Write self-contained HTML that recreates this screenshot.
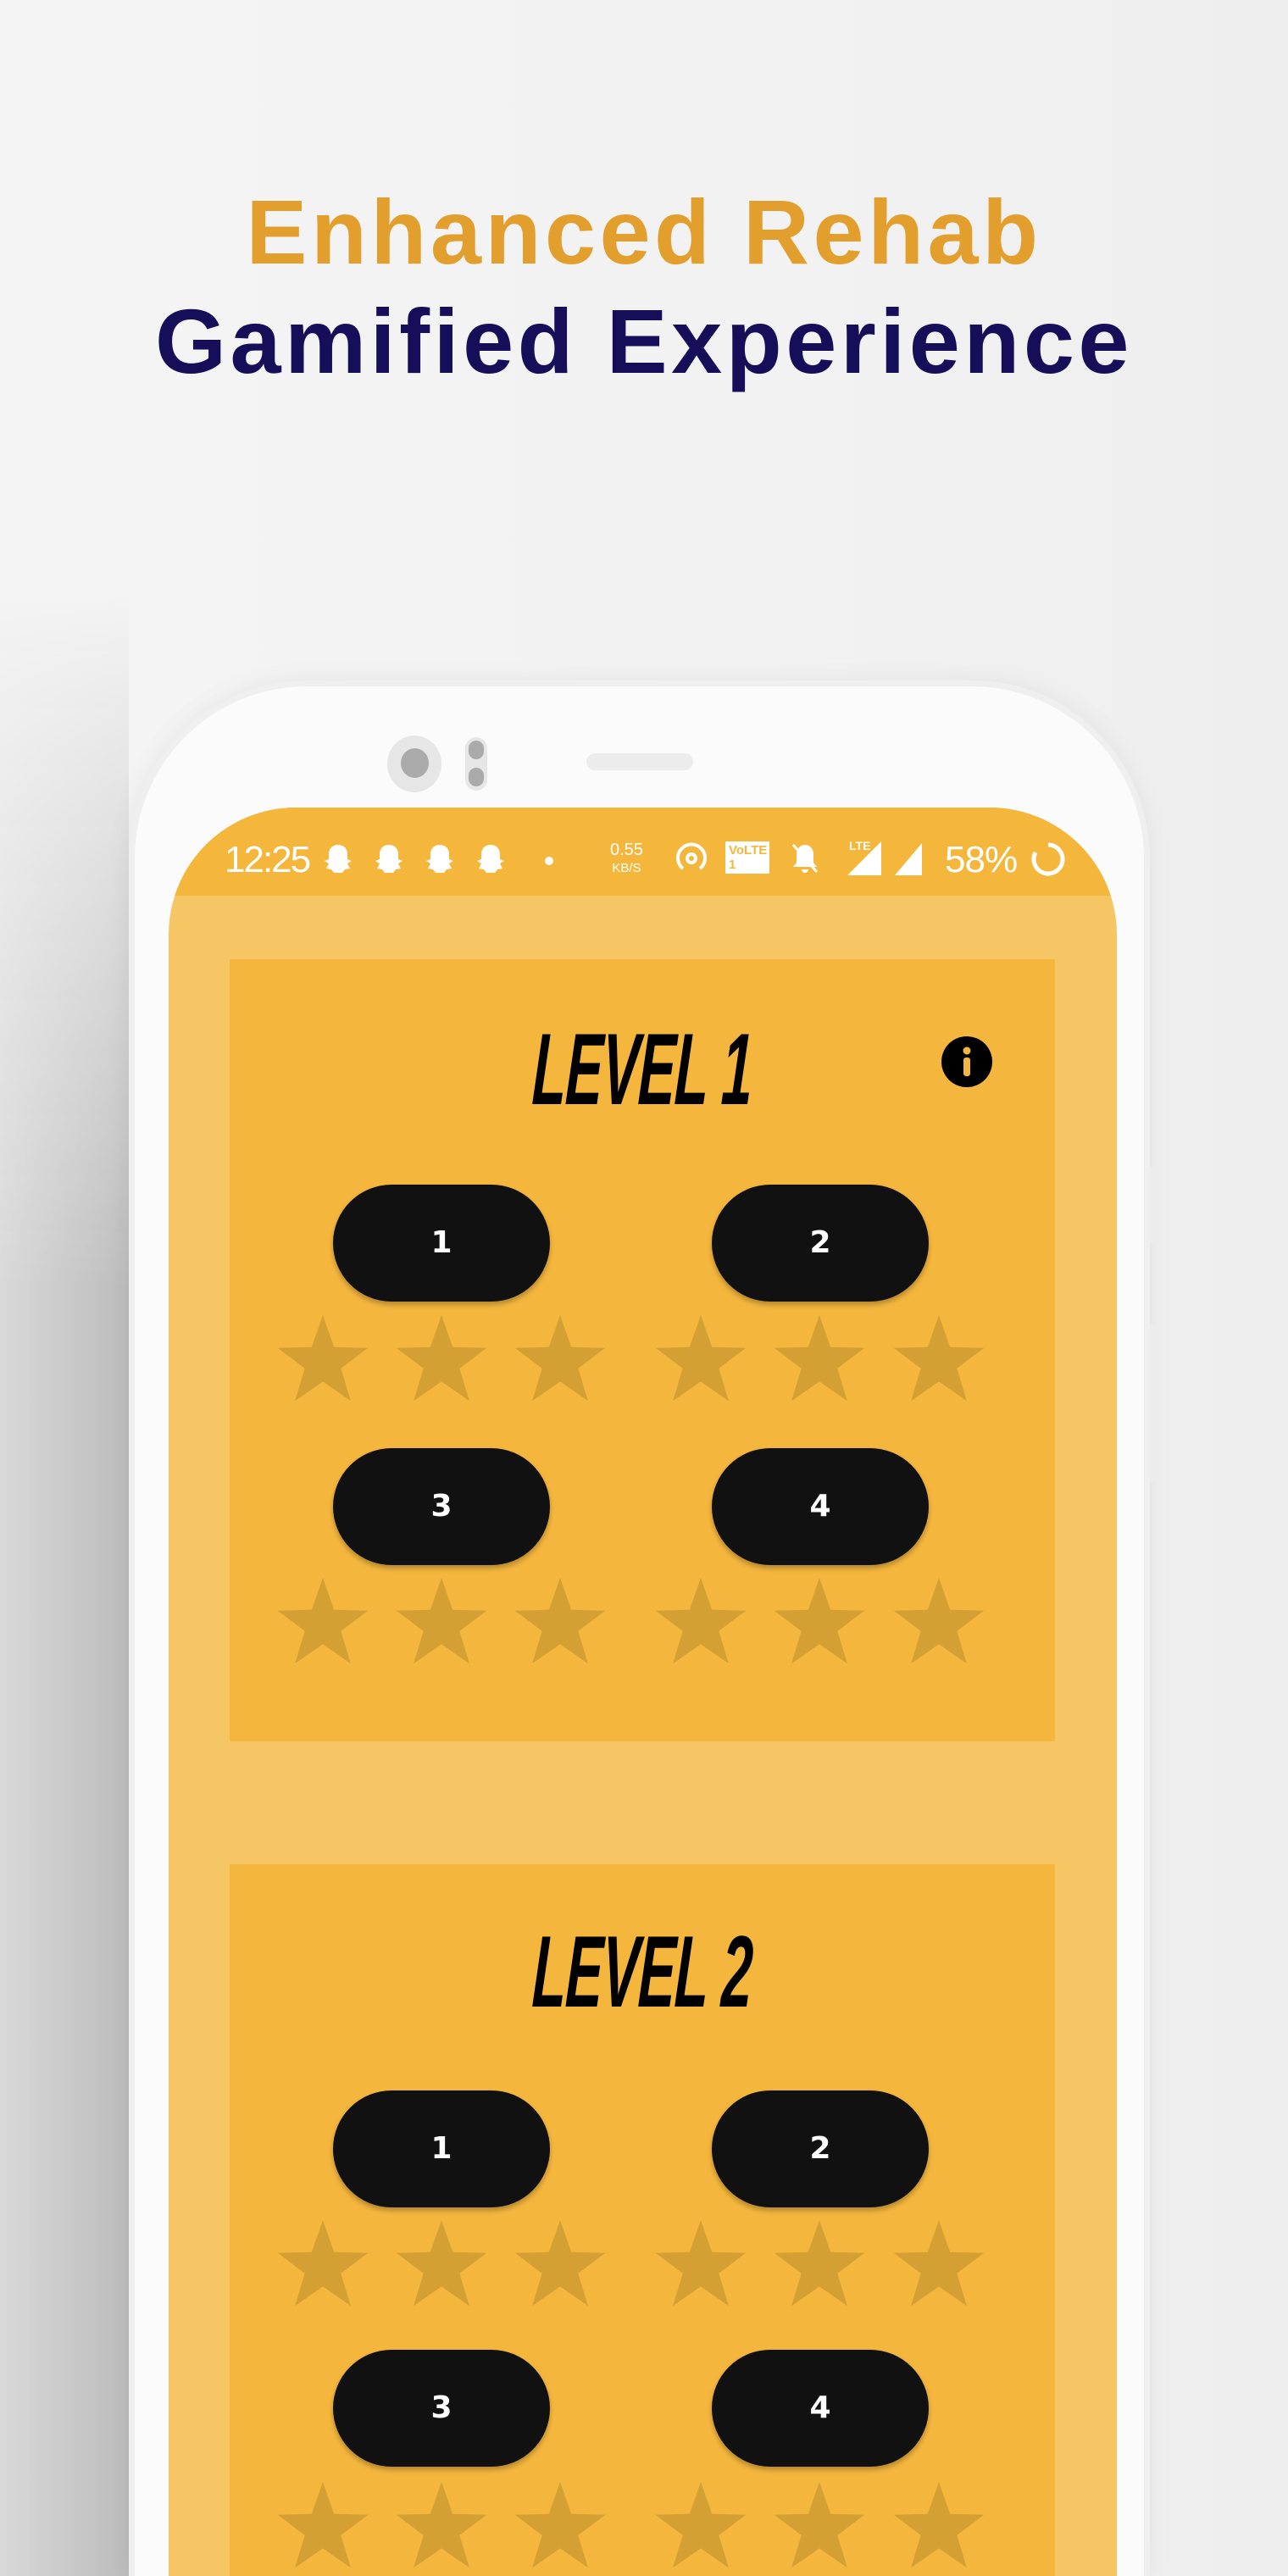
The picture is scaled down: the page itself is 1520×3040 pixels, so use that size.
<!DOCTYPE html>
<html><head><meta charset="utf-8"><style>
*{margin:0;padding:0;box-sizing:border-box}
html{width:1520px;height:3040px;overflow:hidden}
body{width:1520px;height:3040px;overflow:hidden;position:relative;background:linear-gradient(90deg,#f4f4f4,#f2f2f2 60%,#eeeeee);font-family:"Liberation Sans",sans-serif}
.abs{position:absolute}
.t{position:absolute;left:0;width:1520px;text-align:center;font-weight:bold;font-size:108px;line-height:108px;letter-spacing:4.5px;white-space:nowrap}
.shade{left:0;top:700px;width:152px;height:2340px;background:linear-gradient(90deg,#d9d9d9,#bcbcbc);-webkit-mask-image:linear-gradient(180deg,transparent,#000 35%);mask-image:linear-gradient(180deg,transparent,#000 35%)}
.phone{left:152px;top:803px;width:1205px;height:2237px;background:#fbfbfb;border:7px solid #efefef;border-bottom:none;border-radius:210px 210px 0 0;box-shadow:0 0 30px rgba(0,0,0,.06)}
.side{left:1357px;width:12px;background:#ececec;border-radius:0 3px 3px 0}
.screen{left:199px;top:953px;width:1119px;height:2087px;background:#F6C665;border-radius:150px 150px 0 0;overflow:hidden}
.sbar{position:absolute;left:0;top:0;width:1119px;height:104px;background:#F4B63B;color:#fff;font-size:40px}
.card{position:absolute;left:72px;width:974px;background:#F4B63D}
.lvl{position:absolute;left:0;width:974px;text-align:center;font-weight:bold;font-style:italic;font-size:120px;line-height:120px;color:#000;transform:scaleX(.55) skewX(-4deg);letter-spacing:-2px}
.btn{position:absolute;width:256px;height:138px;border-radius:69px;background:#111;color:#fff;font-weight:900;font-size:36px;line-height:138px;text-align:center;box-shadow:0 4px 6px rgba(0,0,0,.25);font-family:"DejaVu Sans","Liberation Sans",sans-serif}
</style></head><body>
<div class="t" style="top:220px;color:#E39F2D">Enhanced Rehab</div>
<div class="t" style="top:349px;color:#160E58">Gamified Experience</div>

<div class="abs shade"></div>
<div class="abs phone"></div>
<div class="abs side" style="top:1377px;height:90px"></div>
<div class="abs side" style="top:1563px;height:186px"></div>
<div class="abs" style="left:457px;top:868px;width:64px;height:67px;border-radius:50%;background:#e6e6e6"></div>
<div class="abs" style="left:473px;top:883px;width:33px;height:35px;border-radius:50%;background:#aaa"></div>
<div class="abs" style="left:549px;top:870px;width:26px;height:63px;border-radius:13px;background:#e6e6e6"></div>
<div class="abs" style="left:553px;top:874px;width:18px;height:22px;border-radius:9px;background:#aaa"></div>
<div class="abs" style="left:553px;top:906px;width:18px;height:22px;border-radius:9px;background:#aaa"></div>
<div class="abs" style="left:692px;top:889px;width:126px;height:20px;border-radius:10px;background:#ececec"></div>

<div class="abs screen">
 <div class="sbar">
  <div class="abs" style="left:66px;top:40px;font-size:44px;letter-spacing:-2px;line-height:44px">12:25</div>
  <svg class="abs" style="left:182px;top:42px" width="250" height="40" viewBox="0 0 250 40" fill="#fff">
   <g id="g"><path d="M18 2c7 0 11 5 11 11v6l5 2-5 3 3 6-6 1-3 4h-10l-3-4-6-1 3-6-5-3 5-2v-6c0-6 4-11 11-11z"/></g>
   <use href="#g" x="60"/><use href="#g" x="120"/><use href="#g" x="180"/>
  </svg>
  <div class="abs" style="left:444px;top:58px;width:10px;height:10px;border-radius:50%;background:#fff"></div>
  <div class="abs" style="left:521px;top:40px;font-size:20px;line-height:20px;text-align:center">0.55<br><span style="font-size:15px">KB/S</span></div>
  <svg class="abs" style="left:597px;top:38px" width="40" height="44" viewBox="0 0 40 44" fill="none" stroke="#fff" stroke-width="4"><circle cx="20" cy="22" r="5"/><path d="M10 34a16 16 0 1 1 20 0"/></svg>
  <div class="abs" style="left:657px;top:40px;width:52px;height:38px;background:#fff;color:#F4B63B;font-size:15px;line-height:17px;font-weight:bold;padding:2px 4px">VoLTE 1</div>
  <svg class="abs" style="left:735px;top:40px" width="32" height="40" viewBox="0 0 32 40" fill="#fff"><path d="M16 4c6 0 10 5 10 11v10l4 5H2l4-5V15C6 9 10 4 16 4zM12 33h8a4 4 0 0 1-8 0z"/><path d="M2 4l28 32" stroke="#fff" stroke-width="3"/></svg>
  <svg class="abs" style="left:787px;top:36px" width="56" height="46" viewBox="0 0 56 46" fill="#fff"><path d="M14 44L54 4v40z"/><text x="16" y="14" font-size="14" font-family="Liberation Sans" font-weight="bold">LTE</text></svg>
  <svg class="abs" style="left:855px;top:38px" width="42" height="44" viewBox="0 0 42 44" fill="#fff"><path d="M2 42L34 4v38z"/></svg>
  <div class="abs" style="left:916px;top:40px;font-size:44px;line-height:44px;letter-spacing:-1px">58%</div>
  <svg class="abs" style="left:1018px;top:40px" width="40" height="42" viewBox="0 0 40 42" fill="none" stroke="#fff" stroke-width="5"><path d="M20 4a17 17 0 1 1-15 9"/></svg>
 </div>

 <div class="card" style="top:179px;height:923px">
  <div class="lvl" style="top:70px">LEVEL 1</div>
  <svg class="abs" style="left:840px;top:91px" width="60" height="60" viewBox="0 0 60 60"><circle cx="30" cy="30" r="30" fill="#000"/><circle cx="30" cy="17" r="4.5" fill="#F4B63D"/><rect x="26" y="25" width="8" height="22" rx="3" fill="#F4B63D"/></svg>
  <div class="btn" style="left:122px;top:266px">1</div>
  <div class="btn" style="left:569px;top:266px">2</div>
  <div class="btn" style="left:122px;top:577px">3</div>
  <div class="btn" style="left:569px;top:577px">4</div>
 </div>
 <div class="card" style="top:1247px;height:840px">
  <div class="lvl" style="top:67px">LEVEL 2</div>
  <div class="btn" style="left:122px;top:267px">1</div>
  <div class="btn" style="left:569px;top:267px">2</div>
  <div class="btn" style="left:122px;top:573px">3</div>
  <div class="btn" style="left:569px;top:573px">4</div>
 </div>
</div>

<svg class="abs" style="left:0;top:0" width="1520" height="3040" viewBox="0 0 1520 3040">
 <defs><path id="s" d="M0,-56 L13.2,-18.2 L53.3,-17.3 L21.3,6.9 L32.9,45.3 L0,22.4 L-32.9,45.3 L-21.3,6.9 L-53.3,-17.3 L-13.2,-18.2Z" fill="#D4A033"/></defs>
 <g>
  <use href="#s" x="381" y="1608"/><use href="#s" x="521" y="1608"/><use href="#s" x="661" y="1608"/>
  <use href="#s" x="827" y="1608"/><use href="#s" x="967" y="1608"/><use href="#s" x="1108" y="1608"/>
  <use href="#s" x="381" y="1918"/><use href="#s" x="521" y="1918"/><use href="#s" x="661" y="1918"/>
  <use href="#s" x="827" y="1918"/><use href="#s" x="967" y="1918"/><use href="#s" x="1108" y="1918"/>
  <use href="#s" x="381" y="2676"/><use href="#s" x="521" y="2676"/><use href="#s" x="661" y="2676"/>
  <use href="#s" x="827" y="2676"/><use href="#s" x="967" y="2676"/><use href="#s" x="1108" y="2676"/>
  <use href="#s" x="381" y="2985"/><use href="#s" x="521" y="2985"/><use href="#s" x="661" y="2985"/>
  <use href="#s" x="827" y="2985"/><use href="#s" x="967" y="2985"/><use href="#s" x="1108" y="2985"/>
 </g>
</svg>
</body></html>
